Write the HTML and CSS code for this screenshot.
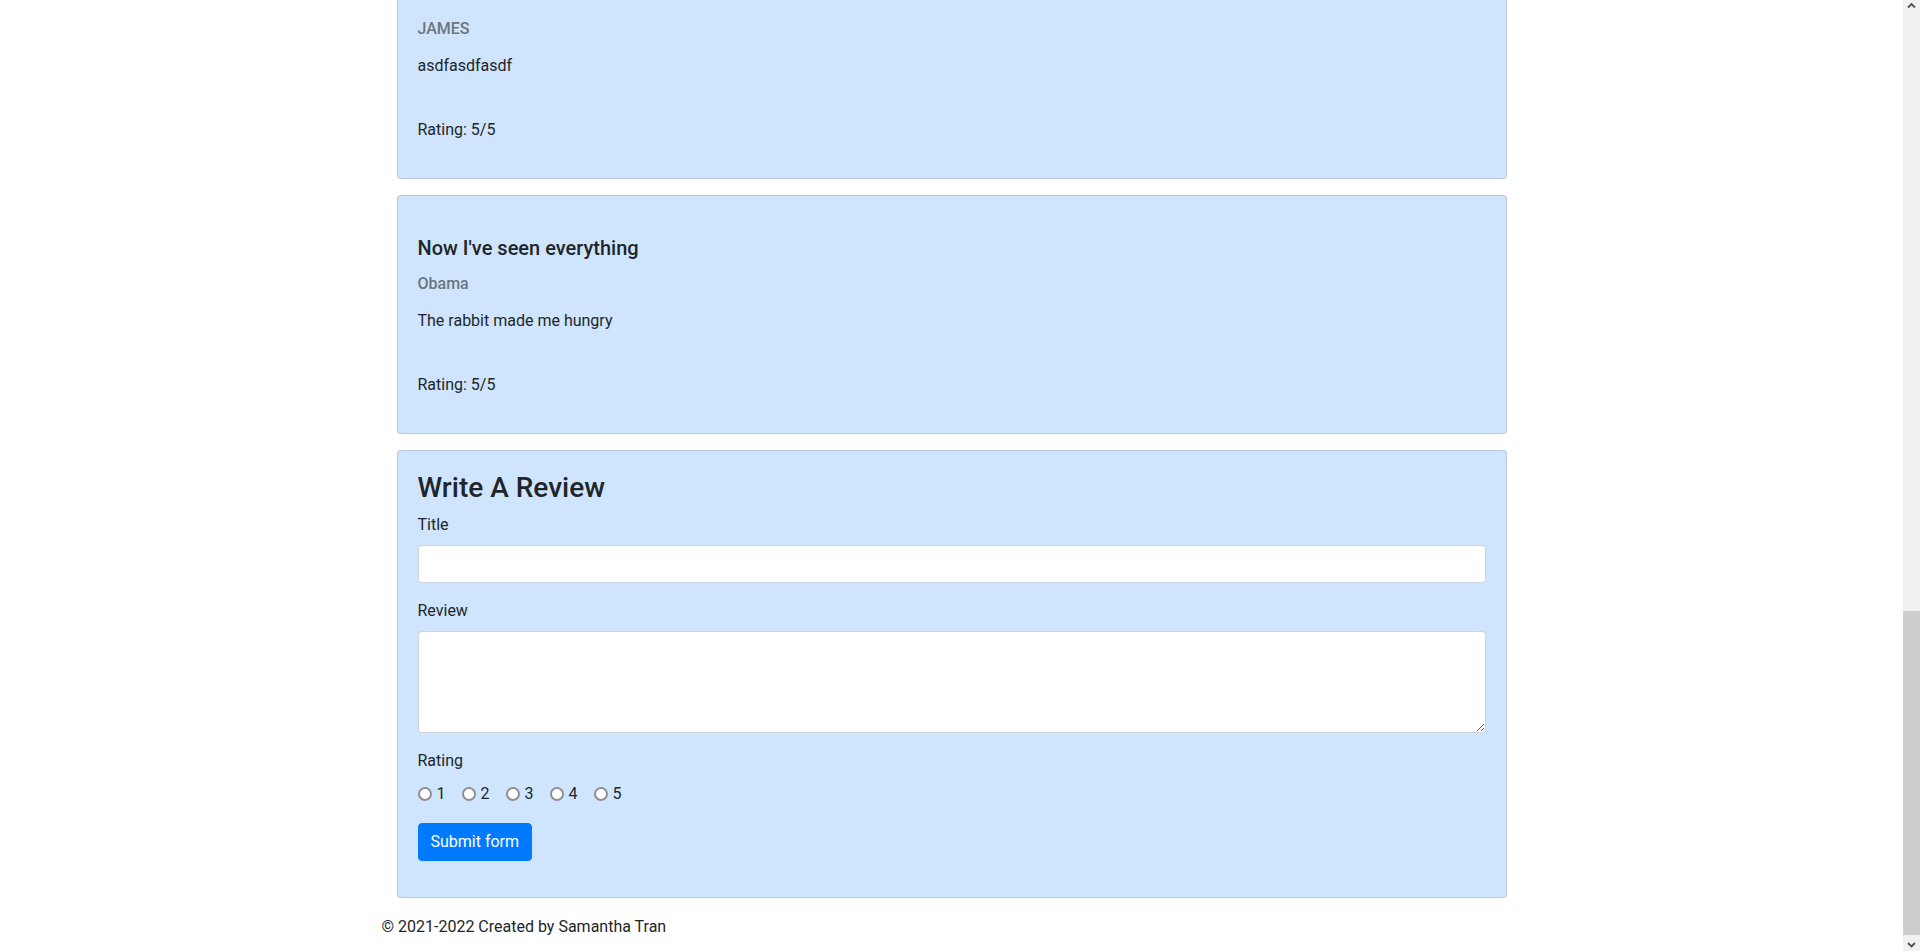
FILE: index.html
```html
<!DOCTYPE html>
<html lang="en">
<head>
<meta charset="utf-8">
<title>Reviews</title>
<link rel="stylesheet" href="styles.css">
</head>
<body>
<div class="window">
  <div class="page">
    <main class="container">
      <div class="review-card">
        <div class="review-body">
          <h6 class="review-author">JAMES</h6>
          <p class="review-text">asdfasdfasdf</p>
          <p class="review-rating">Rating: 5/5</p>
        </div>
      </div>

      <div class="review-card">
        <div class="review-body">
          <h5 class="review-title">Now I've seen everything</h5>
          <h6 class="review-author">Obama</h6>
          <p class="review-text">The rabbit made me hungry</p>
          <p class="review-rating">Rating: 5/5</p>
        </div>
      </div>

      <div class="review-card">
        <form class="form-body">
          <h3 class="form-title">Write A Review</h3>
          <div class="form-group">
            <label class="form-label" for="title">Title</label>
            <input class="form-control" type="text" id="title">
          </div>
          <div class="form-group">
            <label class="form-label" for="body">Review</label>
            <textarea class="form-control form-textarea" id="body"></textarea>
          </div>
          <div class="form-group">
            <label class="form-label">Rating</label>
            <div class="rating-row">
              <label class="check-inline"><input class="check-input" type="radio" name="rating" value="1">1</label>
              <label class="check-inline"><input class="check-input" type="radio" name="rating" value="2">2</label>
              <label class="check-inline"><input class="check-input" type="radio" name="rating" value="3">3</label>
              <label class="check-inline"><input class="check-input" type="radio" name="rating" value="4">4</label>
              <label class="check-inline"><input class="check-input" type="radio" name="rating" value="5">5</label>
            </div>
          </div>
          <div class="form-actions">
            <button class="btn-primary" type="submit">Submit form</button>
          </div>
        </form>
      </div>
    </main>
    <footer class="footer">
      <span>© 2021-2022 Created by Samantha Tran</span>
    </footer>
  </div>
  <div class="scrollbar" aria-hidden="true">
    <div class="scroll-btn">
      <svg width="17" height="17" viewBox="0 0 17 17"><polyline points="5,7.5 8.5,4 12,7.5" fill="none" stroke="#505050" stroke-width="1.8"/></svg>
    </div>
    <div class="scroll-track">
      <div class="scroll-thumb"></div>
    </div>
    <div class="scroll-btn">
      <svg width="17" height="16" viewBox="0 0 17 16"><polyline points="5,8 8.5,11.5 12,8" fill="none" stroke="#505050" stroke-width="1.8"/></svg>
    </div>
  </div>
</div>
</body>
</html>
```

FILE: styles.css
```css
* {
  box-sizing: border-box;
}

body {
  margin: 0;
  font-family: Roboto, "Liberation Sans", Arial, sans-serif;
  font-size: 16px;
  line-height: 24px;
  color: #212529;
  background: #fff;
}

.window {
  display: flex;
  height: 100vh;
  overflow: hidden;
}

.page {
  flex: 1;
  min-width: 0;
  display: flex;
  flex-direction: column;
  justify-content: flex-end;
  overflow: hidden;
}

.container {
  flex-shrink: 0;
  width: 1140px;
  margin: 0 auto;
  padding: 0 15px;
}

.review-card {
  background: #cfe5fd;
  border: 1px solid rgba(0, 0, 0, 0.125);
  border-radius: 4px;
  margin-bottom: 16px;
}

.review-body {
  padding: 40px 20px 20px;
}

.review-title {
  margin: 0 0 14px;
  font-size: 20px;
  font-weight: 500;
  line-height: 24px;
}

.review-author {
  margin: 0 0 16px;
  font-size: 16px;
  font-weight: 500;
  line-height: 19px;
  color: #6c757d;
}

.review-text {
  margin: 0 0 40px;
}

.review-rating {
  margin: 0 0 16px;
}

.form-body {
  padding: 20px;
}

.form-title {
  margin: 0 0 8px;
  font-size: 28px;
  font-weight: 500;
  line-height: 33.6px;
}

.form-group {
  margin-bottom: 16px;
}

.form-label {
  display: block;
  margin-bottom: 8px;
}

.form-control {
  display: block;
  width: 100%;
  height: 38px;
  padding: 6px 12px;
  font-family: inherit;
  font-size: 16px;
  line-height: 24px;
  color: #495057;
  background: #fff;
  border: 1px solid #ced4da;
  border-radius: 4px;
}

.form-textarea {
  height: 102px;
  resize: vertical;
}

.rating-row {
  display: flex;
  align-items: center;
  height: 26px;
}

.check-inline {
  display: inline-flex;
  align-items: center;
  margin-right: 16px;
}

.check-inline:last-child {
  margin-right: 0;
}

.check-input {
  appearance: none;
  -webkit-appearance: none;
  width: 14px;
  height: 14px;
  margin: 0 5px 0 0;
  border: 2px solid #8f8f94;
  border-radius: 50%;
  background: #fff;
}

.form-actions {
  margin-bottom: 16px;
}

.btn-primary {
  display: inline-block;
  height: 38px;
  padding: 6px 12px;
  font-family: inherit;
  font-size: 16px;
  line-height: 24px;
  color: #fff;
  background: #007bff;
  border: 1px solid #007bff;
  border-radius: 4px;
  cursor: pointer;
}

.footer {
  flex-shrink: 0;
  width: 1140px;
  margin: 0 auto;
  padding: 1px 0 12px;
}

.scrollbar {
  flex: 0 0 17px;
  display: flex;
  flex-direction: column;
  background: #f1f1f1;
}

.scroll-btn {
  flex: 0 0 auto;
  display: flex;
}

.scroll-track {
  flex: 1;
  display: flex;
  flex-direction: column;
  justify-content: flex-end;
}

.scroll-thumb {
  height: 324px;
  background: #cdcdcd;
}
```
